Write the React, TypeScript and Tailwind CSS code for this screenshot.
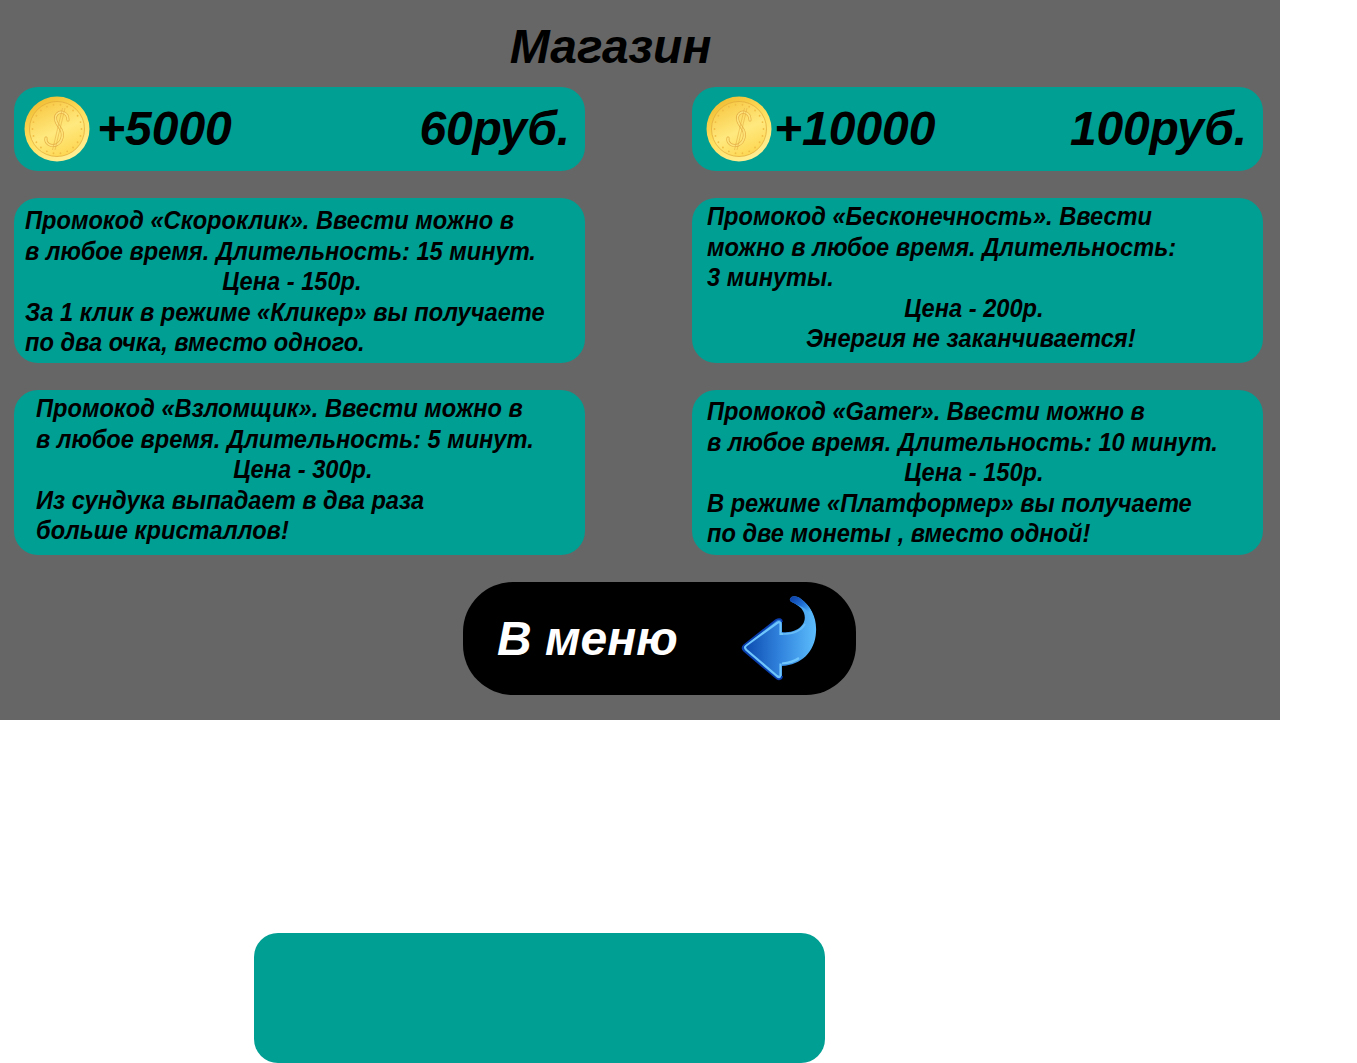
const font = "font-['Liberation_Sans',Arial,sans-serif] font-bold italic";

function Coin({ id }: { id: string }) {
  const stars = Array.from({ length: 22 }, (_, i) => {
    const a = (i / 22) * Math.PI * 2;
    return { x: 33 + Math.cos(a) * 24.5, y: 33 + Math.sin(a) * 24.5 };
  });
  return (
    <svg width="66" height="66" viewBox="0 0 66 66" className="shrink-0">
      <defs>
        <linearGradient id={`${id}-rim`} x1="0.2" y1="0" x2="0.75" y2="1">
          <stop offset="0" stopColor="#efbb30" />
          <stop offset="0.5" stopColor="#ffe060" />
          <stop offset="1" stopColor="#fff09a" />
        </linearGradient>
        <linearGradient id={`${id}-face`} x1="0.25" y1="0" x2="0.7" y2="1">
          <stop offset="0" stopColor="#f8c843" />
          <stop offset="0.55" stopColor="#ffe97f" />
          <stop offset="1" stopColor="#fdd650" />
        </linearGradient>
      </defs>
      <circle cx="33" cy="33" r="32.5" fill={`url(#${id}-rim)`} />
      <circle cx="33" cy="33" r="27.5" fill={`url(#${id}-face)`} stroke="#dfa838" strokeWidth="0.7" />
      {stars.map((s, i) => (
        <circle key={i} cx={s.x} cy={s.y} r="0.9" fill="#f0bd45" />
      ))}
      <path
        d="M44 24C44 17 37 14 33 18 29 22 33 28 36 32 40 37 39 46 32 49 26 51 21 47 22 42"
        fill="none"
        stroke="#e4ae44"
        strokeWidth="3"
        strokeLinecap="round"
      />
      <path
        d="M44 24C44 17 37 14 33 18 29 22 33 28 36 32 40 37 39 46 32 49 26 51 21 47 22 42"
        fill="none"
        stroke="#fde27a"
        strokeWidth="1.7"
        strokeLinecap="round"
      />
      <path d="M38.5 12 28.5 54M41 12 31 54" stroke="#e4ae44" strokeWidth="0.6" />
    </svg>
  );
}

function BackArrow() {
  return (
    <svg width="80" height="90" viewBox="0 0 80 90" className="shrink-0">
      <defs>
        <linearGradient id="arrow-fill" x1="0" y1="0.5" x2="1" y2="0.5">
          <stop offset="0" stopColor="#0a48ae" />
          <stop offset="0.55" stopColor="#3488e0" />
          <stop offset="1" stopColor="#5cbcfb" />
        </linearGradient>
        <linearGradient id="arrow-tail" x1="0.2" y1="0" x2="0.75" y2="0.7">
          <stop offset="0" stopColor="#0f46ad" />
          <stop offset="0.5" stopColor="#1f6fd4" />
          <stop offset="1" stopColor="#55b6fa" />
        </linearGradient>
      </defs>
      <path
        d="M51 5C53 1 58 2 62 5 72 12 78 24 77 38 76 58 62 71 43 72L43 82C43 86 39 86 37 84L5 57C3 55 3 53 5 51L37 26C40 24 43 25 43 28L43 38C52 39 60 36 64 30 68 23 65 15 58 11 54 8 50 8 51 5Z"
        fill="url(#arrow-fill)"
      />
      <path
        d="M51 5C53 1 58 2 62 5 70 11 74 18 75 27 72 20 66 13 58 11 54 8 50 8 51 5Z"
        fill="url(#arrow-tail)"
      />
      <path d="M44 40C53 40 62 37 66 30" fill="none" stroke="#66bdf8" strokeWidth="1.6" />
      <path
        d="M43 69.5C50 69 56 67 60 64M41.5 69.5 41.5 81C41.5 83.5 40 83.5 38 82L7.5 56C5.5 54 5.5 53 7.5 51L38 29C40 27.5 41.5 28 41.5 30L41.5 40 44 40"
        fill="none"
        stroke="#6fc6fd"
        strokeWidth="2.2"
      />
      <path
        d="M43 82C43 86 39 86 37 84L5 57C3 55 3 53 5 51L37 26C40 24 43 25 43 28"
        fill="none"
        stroke="#0a3dae"
        strokeWidth="1.6"
      />
    </svg>
  );
}

function PriceCard({ id, amount, price, pad, gap }: { id: string; amount: string; price: string; pad: string; gap: string }) {
  return (
    <div className={`flex h-[84px] items-center rounded-[24px] bg-[#009f93] text-[48px] text-black ${pad} ${font}`}>
      <Coin id={id} />
      <span className={gap}>{amount}</span>
      <span className="ml-auto tracking-[-0.2px]">{price}</span>
    </div>
  );
}

function PromoCard({ lines, pt, pl }: { lines: { text: string; center?: boolean; shift?: boolean }[]; pt: string; pl: string }) {
  return (
    <div className={`h-[165px] rounded-[24px] bg-[#009f93] text-black ${pt} ${pl}`}>
      {/* the reference text is tall and narrow, so squeeze a 20pt block */}
      <div className={`w-[602px] origin-left scale-x-[0.887] text-[26.67px] leading-[30.6px] ${font}`}>
        {lines.map((l) => (
          <div key={l.text} className={l.center ? (l.shift ? "pr-[7px] text-center" : "text-center") : ""}>
            {l.text}
          </div>
        ))}
      </div>
    </div>
  );
}

export default function App() {
  return (
    <div className="bg-white">
      <div className="h-[720px] w-[1280px] bg-[#666666]">
        <h1 className={`h-[87px] w-[1221px] pt-[19px] text-center text-[48px] leading-[55px] text-black ${font}`}>
          Магазин
        </h1>
        <div className="ml-[14px] grid grid-cols-[571px_571px] gap-x-[107px] gap-y-[27px]">
          <PriceCard id="coin-a" amount="+5000" price="60руб." pad="pl-[10px] pr-[15px]" gap="ml-[7px]" />
          <PriceCard id="coin-b" amount="+10000" price="100руб." pad="pl-[14px] pr-[16px]" gap="ml-[2px]" />
          <PromoCard
            pt="pt-[7px]"
            pl="pl-[11px]"
            lines={[
              { text: "Промокод «Скороклик». Ввести можно в" },
              { text: "в любое время. Длительность: 15 минут." },
              { text: "Цена - 150р.", center: true },
              { text: "За 1 клик в режиме «Кликер» вы получаете" },
              { text: "по два очка, вместо одного." },
            ]}
          />
          <PromoCard
            pt="pt-[3px]"
            pl="pl-[15px]"
            lines={[
              { text: "Промокод «Бесконечность». Ввести" },
              { text: "можно в любое время. Длительность:" },
              { text: "3 минуты." },
              { text: "Цена - 200р.", center: true },
              { text: "Энергия не заканчивается!", center: true, shift: true },
            ]}
          />
          <PromoCard
            pt="pt-[3px]"
            pl="pl-[22px]"
            lines={[
              { text: "Промокод «Взломщик». Ввести можно в" },
              { text: "в любое время. Длительность: 5 минут." },
              { text: "Цена - 300р.", center: true },
              { text: "Из сундука выпадает в два раза" },
              { text: "больше кристаллов!" },
            ]}
          />
          <PromoCard
            pt="pt-[6px]"
            pl="pl-[15px]"
            lines={[
              { text: "Промокод «Gamer». Ввести можно в" },
              { text: "в любое время. Длительность: 10 минут." },
              { text: "Цена - 150р.", center: true },
              { text: "В режиме «Платформер» вы получаете" },
              { text: "по две монеты , вместо одной!" },
            ]}
          />
        </div>
        <div className={`ml-[463px] mt-[27px] flex h-[113px] w-[393px] items-center rounded-[50px] bg-black pl-[34px] text-[48px] text-white ${font}`}>
          <span className="pt-[1px]">В меню</span>
          <span className="ml-auto mr-[37px] flex">
            <BackArrow />
          </span>
        </div>
      </div>
      <div className="ml-[254px] mt-[213px] h-[130px] w-[571px] rounded-[24px] bg-[#009f93]" />
    </div>
  );
}
